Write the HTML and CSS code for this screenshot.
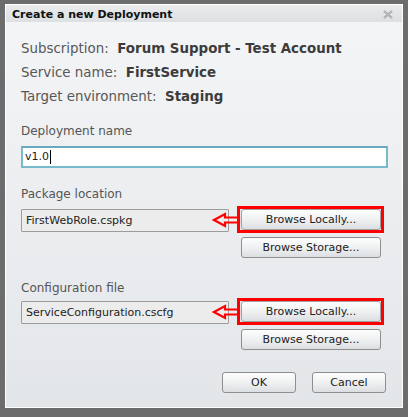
FILE: index.html
```html
<!DOCTYPE html>
<html>
<head>
<meta charset="utf-8">
<link rel="stylesheet" href="styles.css">
</head>
<body>
<div class="dialog">
  <div class="titlebar">
    <span class="title">Create a new Deployment</span>
    <svg class="close" width="10" height="9" viewBox="0 0 10 9">
      <path d="M1 1 L9 8 M9 1 L1 8" stroke="#9a9a9a" stroke-width="2" fill="none"/>
      <path d="M1 1 L9 8 M9 1 L1 8" stroke="#e6e8ea" stroke-width="0.6" fill="none"/>
    </svg>
  </div>
  <div class="content">
    <div class="info">
      <div class="info-line">Subscription:&nbsp; <b>Forum Support - Test Account</b></div>
      <div class="info-line">Service name:&nbsp; <b>FirstService</b></div>
      <div class="info-line">Target environment:&nbsp; <b>Staging</b></div>
    </div>

    <div class="label label-first">Deployment name</div>
    <div class="text-input">v1.0<span class="caret"></span></div>

    <div class="label label-pkg">Package location</div>
    <div class="file-row">
      <div class="file-box">FirstWebRole.cspkg</div>
      <div class="btn-col">
        <div class="highlight"><div class="btn">Browse Locally...</div></div>
        <div class="btn">Browse Storage...</div>
      </div>
      <svg class="arrow" width="30" height="16" viewBox="0 0 30 16">
        <polygon points="2,8 13,2 13,5.5 27,5.5 27,10.5 13,10.5 13,14" fill="none" stroke="#ff0000" stroke-width="2.2" stroke-linejoin="miter"/>
      </svg>
    </div>

    <div class="label label-cfg">Configuration file</div>
    <div class="file-row">
      <div class="file-box">ServiceConfiguration.cscfg</div>
      <div class="btn-col">
        <div class="highlight"><div class="btn">Browse Locally...</div></div>
        <div class="btn">Browse Storage...</div>
      </div>
      <svg class="arrow" width="30" height="16" viewBox="0 0 30 16">
        <polygon points="2,8 13,2 13,5.5 27,5.5 27,10.5 13,10.5 13,14" fill="none" stroke="#ff0000" stroke-width="2.2" stroke-linejoin="miter"/>
      </svg>
    </div>

    <div class="actions">
      <div class="btn btn-small">OK</div>
      <div class="btn btn-small">Cancel</div>
    </div>
  </div>
</div>
</body>
</html>
```

FILE: styles.css
```css
html, body {
  margin: 0;
  padding: 0;
}
body {
  background: #6c6c6c;
  width: 408px;
  height: 417px;
  overflow: hidden;
  font-family: "DejaVu Sans", Verdana, sans-serif;
}
.dialog {
  margin: 4px 0 0 5px;
  width: 396px;
  height: 402px;
  border: 1px solid #ffffff;
  background: linear-gradient(#f4f5f7, #e3e6e9);
  display: flex;
  flex-direction: column;
}
.titlebar {
  height: 17px;
  flex: none;
  background: linear-gradient(#e9ebed, #dde0e3);
  display: flex;
  align-items: center;
  justify-content: space-between;
  padding: 1px 9px 0 6px;
  box-sizing: border-box;
}
.title {
  font-weight: bold;
  font-size: 11px;
  color: #111;
}
.close {
  display: block;
}
.content {
  padding: 0 16px 0 15px;
  display: flex;
  flex-direction: column;
  position: relative;
}
.info {
  margin-top: 15px;
}
.info-line {
  height: 24px;
  line-height: 24px;
  font-size: 13.4px;
  color: #575757;
  white-space: nowrap;
}
.info-line b {
  color: #3c3c3c;
}
.label {
  font-size: 12px;
  color: #555;
  height: 16px;
  line-height: 16px;
}
.label-first { margin-top: 14px; }
.label-pkg { margin-top: 18px; }
.label-cfg { margin-top: 22px; }
.text-input {
  margin-top: 7px;
  height: 18px;
  width: 361px;
  border: 2px solid #79b9cc;
  border-top-color: #6aa9bd;
  background: #fff;
  font-size: 11px;
  line-height: 18px;
  padding-left: 2px;
  color: #222;
  box-sizing: content-box;
  display: flex;
  align-items: center;
}
.caret {
  display: inline-block;
  width: 1px;
  height: 14px;
  background: #000;
  margin-left: 1px;
}
.file-row {
  margin-top: 7px;
  display: flex;
  gap: 12px;
  position: relative;
}
.label-cfg + .file-row { margin-top: 5px; }
.file-box {
  width: 202px;
  height: 21px;
  border: 1px solid #9c9c9c;
  border-radius: 1px;
  background: #ececec;
  font-size: 11px;
  line-height: 21px;
  padding-left: 4px;
  color: #222;
  white-space: nowrap;
}
.btn-col {
  display: flex;
  flex-direction: column;
  gap: 7px;
}
.btn {
  width: 138px;
  height: 19px;
  border: 1px solid #8e8e8e;
  border-radius: 3px;
  background: linear-gradient(#fdfdfd, #f1f2f3 45%, #dcdfe2);
  font-size: 11px;
  line-height: 19px;
  text-align: center;
  color: #222;
  box-sizing: content-box;
}
.highlight {
  margin: -3px -3px -3px -4px;
  border: 3px solid #ff0000;
  padding: 0 0 0 1px;
}
.highlight .btn {
  border-color: #a0a0a0;
}
.arrow {
  position: absolute;
  left: 191px;
  top: 3px;
}
.actions {
  margin-top: 22px;
  display: flex;
  justify-content: flex-end;
  gap: 16px;
  padding-right: 0;
}
.btn-small {
  width: 72px;
}
```
